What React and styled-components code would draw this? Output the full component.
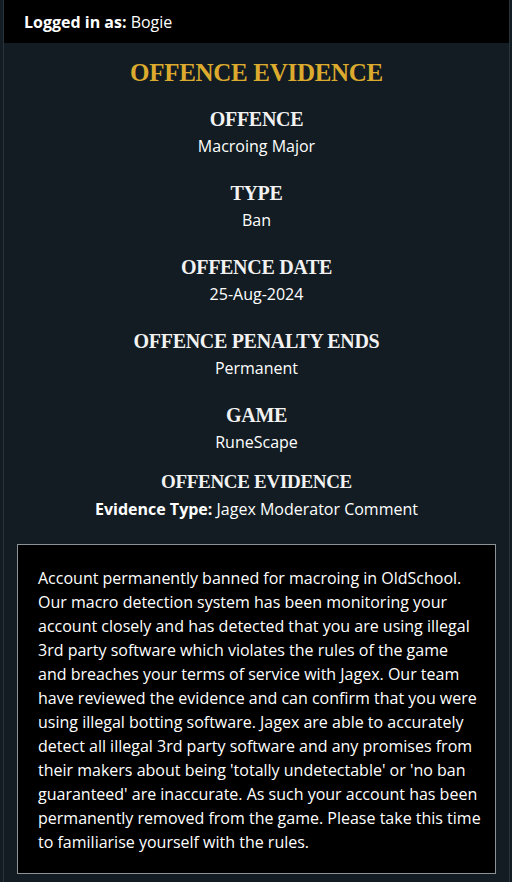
import React from "react";
import styled, { createGlobalStyle } from "styled-components";

const GlobalStyle = createGlobalStyle`
  html, body {
    margin: 0;
    padding: 0;
    background-color: #121c22;
  }
  body {
    font-family: "Open Sans", Lato, sans-serif;
    color: #ffffff;
  }
`;

const Frame = styled.div`
  margin: 0 2px 0 3px;
  min-height: 882px;
  border-left: 1px solid #27343b;
  border-right: 1px solid #27343b;
  box-sizing: border-box;
`;

const TopBar = styled.header`
  height: 43px;
  background-color: #000;
  display: flex;
  align-items: center;
  padding: 0 20px;
  font-size: 16px;
`;

const Strong = styled.strong`
  font-weight: 700;
`;

const Content = styled.main`
  display: flex;
  flex-direction: column;
  align-items: center;
  padding: 15px 12px 0;
`;

const Title = styled.h1`
  margin: 0 0 17px;
  font-family: "Liberation Serif", "Times New Roman", serif;
  font-weight: 700;
  font-size: 25px;
  line-height: 30px;
  color: #dcab2e;
  letter-spacing: -0.3px;
`;

const Section = styled.section`
  display: flex;
  flex-direction: column;
  align-items: center;
  margin-bottom: ${(p) => p.$gap ?? 22}px;
`;

const Label = styled.h2`
  margin: 0;
  font-family: "Liberation Serif", "Times New Roman", serif;
  font-weight: 700;
  font-size: ${(p) => p.$size || 20}px;
  line-height: 28px;
  color: #f2f2f2;
  letter-spacing: -0.3px;
`;

const Value = styled.p`
  margin: 2px 0 0;
  font-size: 16px;
  line-height: 22px;
`;

const EvidenceBox = styled.div`
  align-self: stretch;
  margin: 0 1px;
  background-color: #000;
  border: 1px solid #8c9396;
  padding: 21px 18px 19px 20px;
  font-size: 16px;
  line-height: 24px;
`;

const Line = styled.span`
  display: block;
  white-space: nowrap;
`;

const rows = [
  { label: "OFFENCE", value: "Macroing Major" },
  { label: "TYPE", value: "Ban" },
  { label: "OFFENCE DATE", value: "25-Aug-2024" },
  { label: "OFFENCE PENALTY ENDS", value: "Permanent" },
  { label: "GAME", value: "RuneScape", gap: 15 },
];

// moderator comment, broken the way the original page wraps it
const comment = [
  "Account permanently banned for macroing in OldSchool.",
  "Our macro detection system has been monitoring your",
  "account closely and has detected that you are using illegal",
  "3rd party software which violates the rules of the game",
  "and breaches your terms of service with Jagex. Our team",
  "have reviewed the evidence and can confirm that you were",
  "using illegal botting software. Jagex are able to accurately",
  "detect all illegal 3rd party software and any promises from",
  "their makers about being 'totally undetectable' or 'no ban",
  "guaranteed' are inaccurate. As such your account has been",
  "permanently removed from the game. Please take this time",
  "to familiarise yourself with the rules.",
];

function App() {
  return (
    <>
      <GlobalStyle />
      <Frame>
        <TopBar>
          <Strong>Logged in as:</Strong>&nbsp;Bogie
        </TopBar>
        <Content>
          <Title>OFFENCE EVIDENCE</Title>
          {rows.map((row) => (
            <Section key={row.label} $gap={row.gap}>
              <Label>{row.label}</Label>
              <Value>{row.value}</Value>
            </Section>
          ))}
          <Section $gap={24}>
            <Label $size={19}>OFFENCE EVIDENCE</Label>
            <Value>
              <Strong>Evidence Type:</Strong> Jagex Moderator Comment
            </Value>
          </Section>
          <EvidenceBox>
            {comment.map((line, i) => (
              <Line key={i}>{line}</Line>
            ))}
          </EvidenceBox>
        </Content>
      </Frame>
    </>
  );
}

export default App;
